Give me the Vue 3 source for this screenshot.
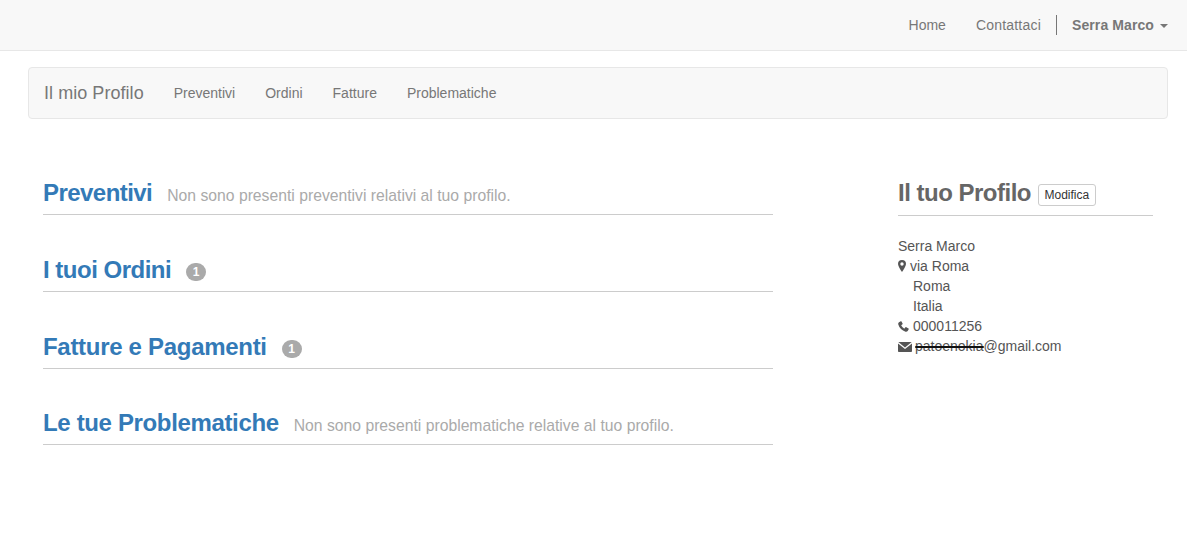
<script setup>
const sections = [
  { title: 'Preventivi', note: 'Non sono presenti preventivi relativi al tuo profilo.' },
  { title: 'I tuoi Ordini', badge: 1 },
  { title: 'Fatture e Pagamenti', badge: 1 },
  { title: 'Le tue Problematiche', note: 'Non sono presenti problematiche relative al tuo profilo.' },
]
const subnav = ['Preventivi', 'Ordini', 'Fatture', 'Problematiche']
</script>

<template>
  <div class="page">
    <header class="topbar">
      <a class="toplink">Home</a>
      <a class="toplink contact">Contattaci</a>
      <span class="divider"></span>
      <a class="user">Serra Marco<span class="caret"></span></a>
    </header>

    <nav class="subbar">
      <span class="brand">Il mio Profilo</span>
      <a v-for="item in subnav" :key="item" class="sublink">{{ item }}</a>
    </nav>

    <main class="content">
      <section class="left">
        <div v-for="s in sections" :key="s.title" class="sec">
          <h2 class="sec-title">{{ s.title }}</h2>
          <span v-if="s.note" class="note">{{ s.note }}</span>
          <span v-if="s.badge" class="badge">{{ s.badge }}</span>
        </div>
      </section>

      <aside class="right">
        <div class="prof-head">
          <h2 class="prof-title">Il tuo Profilo</h2>
          <button class="edit">Modifica</button>
        </div>
        <div class="addr">
          <div>Serra Marco</div>
          <div class="row">
            <svg class="ic pin" viewBox="0 0 8 12"><path fill-rule="evenodd" d="M4 0a4 4 0 0 0-4 4c0 2.200 2.600 5.800 4 8 1.400-2.200 4-5.800 4-8a4 4 0 0 0-4-4zm0 2.300a1.700 1.700 0 1 1 0 3.400 1.700 1.700 0 0 1 0-3.400z"/></svg>
            <span>via Roma</span>
          </div>
          <div class="indent">Roma</div>
          <div class="indent">Italia</div>
          <div class="row">
            <svg class="ic phone" viewBox="0 0 11 11"><path d="M2.700.3 1 1.300C.3 1.800 0 2.700.3 3.500c1 3.300 3.800 6.200 7.200 7.200.8.300 1.700 0 2.200-.7l1-1.700c.2-.3.100-.6-.2-.8L8.300 6.200c-.3-.2-.6-.1-.8.100l-.8 1c-.2.200-.4.200-.6.100-1.100-.6-2.100-1.600-2.700-2.700-.1-.2-.1-.4.100-.6l1-.8c.2-.2.300-.5.100-.8L3.500.5C3.300.2 3 .1 2.700.3z"/></svg>
            <span>000011256</span>
          </div>
          <div class="row">
            <svg class="ic mail" viewBox="0 0 14 10"><path d="M.3 0h13.400L7 5.400zM0 1.500v7.700c0 .4.400.8.800.8h12.400c.4 0 .8-.4.800-.8V1.500L7 7.100z"/></svg>
            <span class="mailtext"><span class="hidden-name">patoenokia<i class="scribble"></i></span>@gmail.com</span>
          </div>
        </div>
      </aside>
    </main>
  </div>
</template>

<style>
html, body { margin: 0; background: #fff; }
</style>

<style scoped>
.page {
  font-family: "Liberation Sans", Arial, sans-serif;
  font-size: 14px;
  line-height: 20px;
  color: #333;
  height: 542px;
  overflow: hidden;
}
.topbar {
  height: 50px;
  background: #f8f8f8;
  border-bottom: 1px solid #e7e7e7;
  display: flex;
  align-items: center;
  justify-content: flex-end;
  padding-right: 19px;
}
.toplink { color: #777; margin-left: 30px; }
.contact { letter-spacing: 0.2px; }
.divider { width: 1px; height: 20px; background: #777; margin: 0 15px; }
.user { color: #777; font-weight: 700; letter-spacing: 0.1px; }
.caret {
  display: inline-block;
  margin-left: 6px;
  vertical-align: middle;
  border-top: 4px solid #777;
  border-left: 4px solid transparent;
  border-right: 4px solid transparent;
}
.subbar {
  margin: 16px 19px 0 28px;
  height: 50px;
  background: #f8f8f8;
  border: 1px solid #e7e7e7;
  border-radius: 4px;
  display: flex;
  align-items: center;
  padding-left: 15px;
}
.brand { font-size: 18px; color: #777; margin-right: 15px; letter-spacing: 0.05px; }
.sublink { color: #777; margin-left: 15px; margin-right: 15px; }
.content {
  display: flex;
  padding: 60px 34px 0 43px;
  justify-content: space-between;
}
.left { width: 730px; }
.sec {
  display: flex;
  align-items: baseline;
  height: 35px;
  border-bottom: 1px solid #ccc;
  margin-bottom: 41px;
}
.sec:nth-child(3) { margin-bottom: 40px; }
.sec-title {
  margin: 0;
  font-size: 24px;
  line-height: 27px;
  font-weight: 700;
  letter-spacing: -0.5px;
  color: #337ab7;
}
.sec:nth-child(1) .sec-title { letter-spacing: -0.55px; }
.sec:nth-child(3) .sec-title { letter-spacing: -0.3px; }
.sec:nth-child(4) .sec-title { letter-spacing: -0.35px; }
.note { margin-left: 15px; font-size: 15.720px; color: #aaa; }
.badge {
  margin-left: 15px;
  min-width: 20px;
  height: 18px;
  border-radius: 10px;
  background: #aaa;
  color: #fff;
  font-size: 12px;
  font-weight: 700;
  line-height: 18px;
  text-align: center;
  align-self: flex-end;
  margin-bottom: 10px;
}
.right { width: 255px; }
.prof-head {
  display: flex;
  align-items: flex-start;
  height: 36px;
  border-bottom: 1px solid #ccc;
  margin-bottom: 20px;
}
.prof-title {
  margin: 0;
  font-size: 24px;
  line-height: 27px;
  font-weight: 700;
  letter-spacing: -0.5px;
  color: #666;
}
.edit {
  margin-left: 7px;
  margin-top: 5px;
  height: 22px;
  padding: 0 5.500px;
  font: 12px/18px "Liberation Sans", Arial, sans-serif;
  color: #333;
  background: #fff;
  border: 1px solid #ccc;
  border-radius: 3px;
}
.addr { color: #555; }
.row { display: flex; align-items: center; }
.ic { fill: #555; flex: none; }
.pin { width: 8px; height: 12px; margin-right: 4px; }
.phone { width: 11px; height: 11px; margin-right: 4px; }
.mail { width: 14px; height: 10px; margin-right: 3px; margin-top: 1px; }
.indent { padding-left: 15px; }
.hidden-name { position: relative; color: #555; }
.scribble {
  position: absolute;
  left: 0;
  right: 0;
  top: 7.500px;
  height: 2.500px;
  background: #111;
  border-radius: 1px;
}
</style>
